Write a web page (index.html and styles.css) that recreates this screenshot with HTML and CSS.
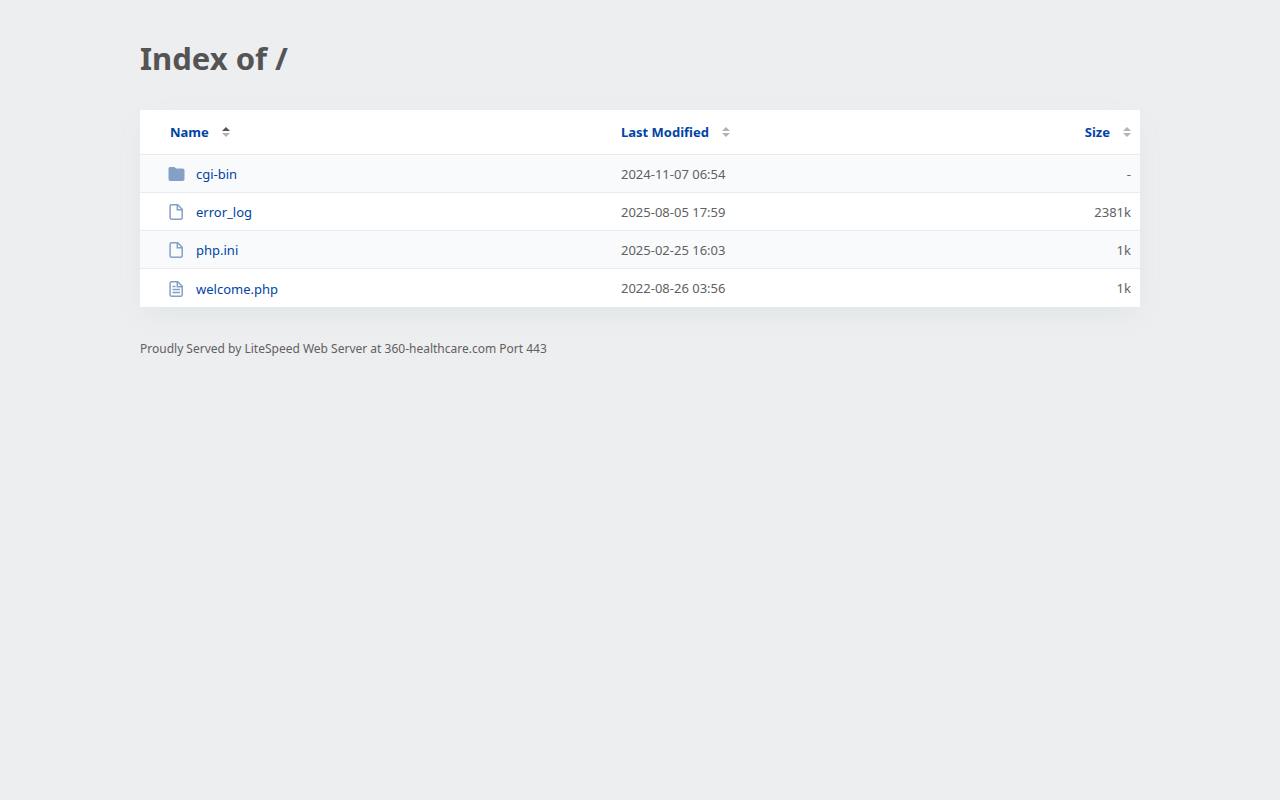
FILE: index.html
```html
<!DOCTYPE html>
<html lang="en">
<head>
    <meta charset="UTF-8">
    <meta name="viewport" content="width=device-width, initial-scale=1.0">
    <title>Index of /</title>
    <link rel="stylesheet" href="styles.css">
</head>
<body>
    <svg class="sprite" aria-hidden="true">
        <symbol id="icon-folder" viewBox="0 0 18 16">
            <path d="M2 1h4.500l1.500 1.500h6.500a2 2 0 0 1 2 2v8.500a2 2 0 0 1-2 2H2.500a2 2 0 0 1-2-2V2.500A1.500 1.500 0 0 1 2 1z" fill="#84a0c6"/>
        </symbol>
        <symbol id="icon-file" viewBox="0 0 18 16">
            <path d="M3.500.8h6.200l4.500 4.500v8.500a1.400 1.400 0 0 1-1.400 1.400H3.500a1.400 1.400 0 0 1-1.400-1.400V2.200A1.400 1.400 0 0 1 3.500.8zM9.300 1v4.700h4.700" fill="none" stroke="#84a0c6" stroke-width="1.500"/>
        </symbol>
        <symbol id="icon-text" viewBox="0 0 18 16">
            <use href="#icon-file"/>
            <path d="M4.500 5.500h3M4.500 8.500h7.500M4.500 11.500h7.500" fill="none" stroke="#84a0c6" stroke-width="1.300"/>
        </symbol>
        <symbol id="icon-up" viewBox="0 0 8 10">
            <path d="M0 4l4-4 4 4z" fill="#555"/>
            <path d="M0 6h8l-4 4z" fill="#b3b3b3"/>
        </symbol>
        <symbol id="icon-sort" viewBox="0 0 8 10">
            <path d="M0 4l4-4 4 4zM0 6h8l-4 4z" fill="#b3b3b3"/>
        </symbol>
    </svg>
    <main class="content">
        <h1>Index of /</h1>
        <table class="listing">
            <thead>
                <tr>
                    <th class="name"><a href="#">Name<svg class="sort"><use href="#icon-up"/></svg></a></th>
                    <th class="modified"><a href="#">Last Modified<svg class="sort"><use href="#icon-sort"/></svg></a></th>
                    <th class="size"><a href="#">Size<svg class="sort"><use href="#icon-sort"/></svg></a></th>
                </tr>
            </thead>
            <tbody>
                <tr>
                    <td class="name"><a href="#"><svg class="icon"><use href="#icon-folder"/></svg>cgi-bin</a></td>
                    <td>2024-11-07 06:54</td>
                    <td class="size">-</td>
                </tr>
                <tr>
                    <td class="name"><a href="#"><svg class="icon"><use href="#icon-file"/></svg>error_log</a></td>
                    <td>2025-08-05 17:59</td>
                    <td class="size">2381k</td>
                </tr>
                <tr>
                    <td class="name"><a href="#"><svg class="icon"><use href="#icon-file"/></svg>php.ini</a></td>
                    <td>2025-02-25 16:03</td>
                    <td class="size">1k</td>
                </tr>
                <tr>
                    <td class="name"><a href="#"><svg class="icon"><use href="#icon-text"/></svg>welcome.php</a></td>
                    <td>2022-08-26 03:56</td>
                    <td class="size">1k</td>
                </tr>
            </tbody>
        </table>
        <footer>Proudly Served by LiteSpeed Web Server at 360-healthcare.com Port 443</footer>
    </main>
</body>
</html>
```
FILE: styles.css
```css
body {
    margin: 0;
    background-color: #edeef0;
    color: #616161;
    font-family: "Segoe UI", "Noto Sans", "Open Sans", sans-serif;
    font-size: 13px;
    line-height: 20px;
}

.sprite {
    display: none;
}

.content {
    max-width: 1000px;
    margin: 0 auto;
    padding: 36px 20px;
}

h1 {
    margin: 0 0 30px;
    color: #545454;
    font-size: 31px;
    line-height: 44px;
}

a {
    color: #0044a5;
    text-decoration: none;
}

a:hover {
    text-decoration: underline;
}

.listing {
    width: 100%;
    border-collapse: separate;
    border-spacing: 0;
    table-layout: fixed;
    background: #fff;
    box-shadow: 0 10px 28px -6px #dbe4e5;
}

th,
td {
    height: 37px;
    padding: 0 9px;
    text-align: left;
    border-bottom: 1px solid #e9ecef;
}

th {
    height: 44px;
}

tbody tr:nth-child(odd) {
    background: #f9fafc;
}

tbody tr:last-child td {
    height: 38px;
    border-bottom: 0;
}

th.name {
    width: 433px;
    padding-left: 30px;
}

td.name {
    padding-left: 28px;
}

.size {
    text-align: right;
}

th a,
td a {
    display: inline-flex;
    align-items: center;
}

td a {
    vertical-align: middle;
}

.sort {
    width: 8px;
    height: 10px;
    margin-left: 13px;
}

.icon {
    width: 18px;
    height: 16px;
    margin-right: 10px;
}

footer {
    margin-top: 32px;
    font-size: 12px;
}
```
